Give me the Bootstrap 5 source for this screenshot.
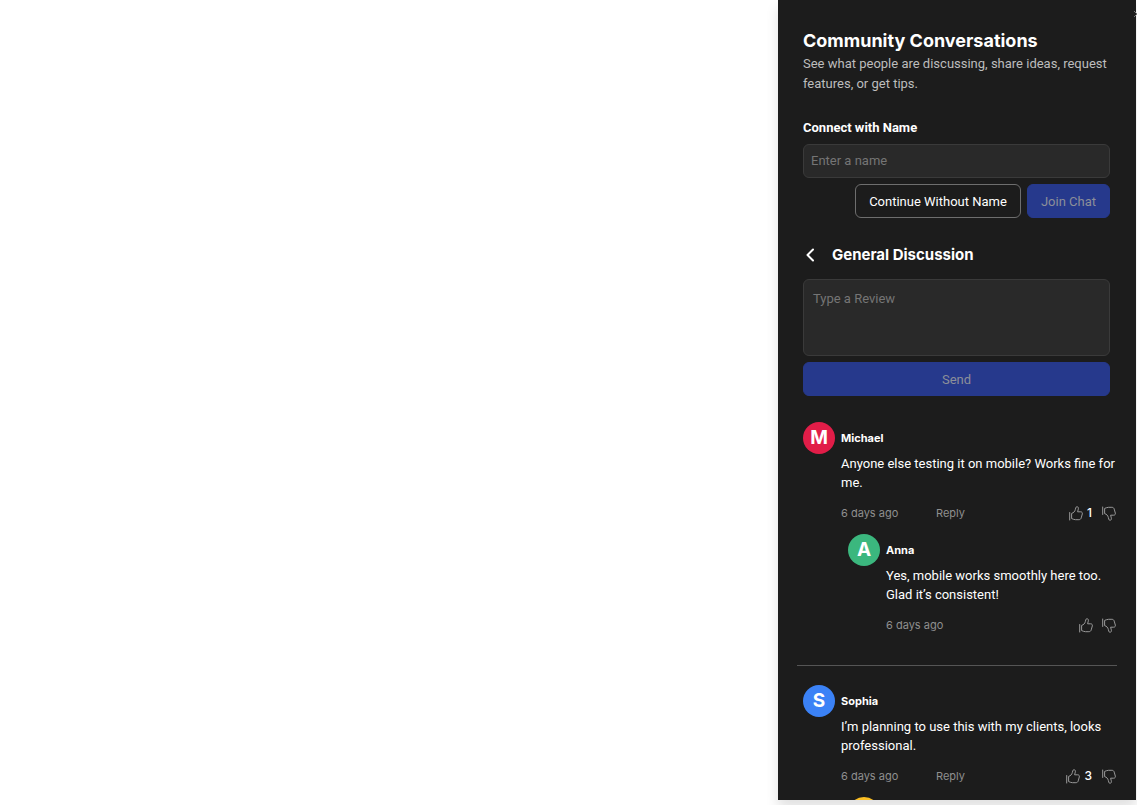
<!DOCTYPE html>
<html lang="en">
<head>
<meta charset="utf-8">
<meta name="viewport" content="width=device-width, initial-scale=1">
<title>Community Conversations</title>
<link href="https://cdn.jsdelivr.net/npm/bootstrap@5.3.0/dist/css/bootstrap.min.css" rel="stylesheet">
<style>
  body { font-family: Roboto, "Liberation Sans", sans-serif; font-size: 13px; line-height: 20px; background: #fff; }
  .chat-stage { height: 100vh; padding: 0 1px 5px 0; }
  .chat-panel { width: 358px; max-width: 100%; background: #1c1c1c; color: #fff; box-shadow: 0 8px 12px rgba(0,0,0,.12); }
  .chat-close { top: 3px; right: -8px; width: 14px; height: 20px; color: #777; line-height: 1; }
  .chat-intro { padding: 27px 26px 0 25px; }
  .chat-title, .chat-topic h2, .chat-avatar, .chat-name, .chat-meta { font-family: Inter, "Liberation Sans", sans-serif; }
  .chat-title { font-size: 18px; line-height: 27px; font-weight: 700; }
  .chat-desc { color: #bdbdbd; }
  .chat-label { font-weight: 700; margin: 24px 0 6px; }
  .chat-field, .chat-field:focus { background: #292929; border: 1px solid #3a3a3a; border-radius: 6px; color: #fff; font-size: 13px; line-height: 20px; }
  .chat-field::placeholder { color: #757575; }
  input.chat-field { height: 34px; padding: 5px 7px 6px; }
  textarea.chat-field { height: 77px; padding: 9px; resize: none; }
  .chat-actions { gap: 6px; margin-top: 6px; }
  .chat-btn { height: 34px; padding: 7px 13px 5px; border-radius: 6px; font-size: 13px; line-height: 20px; color: #fff; border: 1px solid #6e6e6e; }
  .chat-btn:disabled { background: #26398c; border-color: #26398c; color: #8c8f99; opacity: 1; }
  .chat-topic { gap: 14px; margin: 25px 0 12px; }
  .chat-topic h2 { font-size: 15px; line-height: 24px; font-weight: 700; }
  .chat-list { padding: 26px 19px 0 19px; }
  .chat-msg { gap: 6px; padding-left: 6px; margin-bottom: 12px; }
  .chat-reply { padding-left: 51px; }
  .chat-avatar { width: 32px; height: 32px; font-size: 19px; font-weight: 700; }
  .chat-name { font-size: 11px; line-height: 32px; font-weight: 700; }
  .chat-text { line-height: 19px; }
  .chat-meta { margin-top: 12px; font-size: 11px; line-height: 18px; color: #8f8f8f; }
  .chat-time { width: 95px; }
  .chat-link { color: #8f8f8f; font-size: 11px; line-height: 18px; }
  .chat-votes { gap: 9px; padding-right: 1px; }
  .chat-vote { gap: 4px; color: #fff; font-size: 12px; font-weight: 500; line-height: 18px; }
  .chat-count { margin-right: 1px; }
  .chat-vote svg { color: #999; }
  .chat-rule { margin: 31px 0 19px; border-color: #555; opacity: 1; }
  .bg-rose { background: #e11d48; } .bg-mint { background: #3bb77e; } .bg-sky { background: #3b82f6; } .bg-sun { background: #fbbf24; }
</style>
</head>
<body class="overflow-hidden">
<svg class="d-none" aria-hidden="true">
  <symbol id="thumb" viewBox="0 0 14 15"><path d="M.7 6.500v7.500M3 7.300c1.700-.5 2.900-1.900 3.300-3.700L6.800 1.800c.2-.8.600-1.100 1.200-1.100 1.200 0 1.600 1.200 1.300 2.400l-.7 2.700h3.100c1.300 0 1.900 1 1.600 2.200l-1.100 3.900c-.3 1.100-1.100 1.800-2.300 1.800H6.500c-1.400 0-2.200-.6-3.500-1z" fill="none" stroke="currentColor" stroke-linecap="round" stroke-linejoin="round"/></symbol>
</svg>
<div class="chat-stage d-flex justify-content-end">
<aside class="chat-panel position-relative h-100">
  <button class="chat-close btn p-0 border-0 position-absolute" aria-label="Close"><svg width="8" height="8" viewBox="0 0 8 8"><path d="M1 1l6 6M7 1L1 7" stroke="currentColor" fill="none"/></svg></button>
  <div class="h-100 overflow-hidden">
  <div class="chat-intro">
    <h1 class="chat-title mb-0">Community Conversations</h1>
    <p class="chat-desc mb-0">See what people are discussing, share ideas, request features, or get tips.</p>
    <form>
      <label class="chat-label d-block" for="name">Connect with Name</label>
      <input id="name" class="chat-field form-control" type="text" placeholder="Enter a name">
      <div class="chat-actions d-flex justify-content-end">
        <button type="button" class="chat-btn btn">Continue Without Name</button>
        <button type="submit" class="chat-btn btn" disabled>Join Chat</button>
      </div>
    </form>
    <div class="chat-topic d-flex align-items-center">
      <button class="btn p-0 border-0 d-flex text-white" aria-label="Back"><svg width="15" height="16" viewBox="0 0 15 16"><path d="M10 2.500L4.500 8l5.500 5.500" fill="none" stroke="currentColor" stroke-width="2" stroke-linecap="round" stroke-linejoin="round"/></svg></button>
      <h2 class="mb-0">General Discussion</h2>
    </div>
    <form>
      <textarea class="chat-field form-control" placeholder="Type a Review" aria-label="Review"></textarea>
      <div class="chat-actions d-flex"><button class="chat-btn btn w-100" disabled>Send</button></div>
    </form>
  </div>
  <div class="chat-list">
    <article class="chat-msg d-flex">
      <div class="chat-avatar bg-rose rounded-circle d-flex align-items-center justify-content-center flex-shrink-0">M</div>
      <div class="flex-grow-1">
        <div class="chat-name">Michael</div>
        <div class="chat-text">Anyone else testing it on mobile? Works fine for me.</div>
        <div class="chat-meta d-flex"><span class="chat-time">6 days ago</span><button class="chat-link btn p-0 border-0">Reply</button>
          <div class="chat-votes d-flex ms-auto"><button class="chat-vote btn p-0 border-0 d-flex align-items-center" aria-label="Like"><svg width="14" height="15"><use href="#thumb"/></svg><span class="chat-count">1</span></button><button class="chat-vote btn p-0 border-0 d-flex align-items-center" aria-label="Dislike"><svg width="14" height="15" viewBox="0 0 14 15"><use href="#thumb" width="14" height="15" transform="matrix(1 0 0 -1 0 15)"/></svg></button></div></div>
      </div>
    </article>
    <article class="chat-msg chat-reply d-flex">
      <div class="chat-avatar bg-mint rounded-circle d-flex align-items-center justify-content-center flex-shrink-0">A</div>
      <div class="flex-grow-1">
        <div class="chat-name">Anna</div>
        <div class="chat-text">Yes, mobile works smoothly here too. Glad it’s consistent!</div>
        <div class="chat-meta d-flex"><span class="chat-time">6 days ago</span>
          <div class="chat-votes d-flex ms-auto"><button class="chat-vote btn p-0 border-0 d-flex align-items-center" aria-label="Like"><svg width="14" height="15"><use href="#thumb"/></svg></button><button class="chat-vote btn p-0 border-0 d-flex align-items-center" aria-label="Dislike"><svg width="14" height="15" viewBox="0 0 14 15"><use href="#thumb" width="14" height="15" transform="matrix(1 0 0 -1 0 15)"/></svg></button></div></div>
      </div>
    </article>
    <hr class="chat-rule">
    <article class="chat-msg d-flex">
      <div class="chat-avatar bg-sky rounded-circle d-flex align-items-center justify-content-center flex-shrink-0">S</div>
      <div class="flex-grow-1">
        <div class="chat-name">Sophia</div>
        <div class="chat-text">I’m planning to use this with my clients, looks professional.</div>
        <div class="chat-meta d-flex"><span class="chat-time">6 days ago</span><button class="chat-link btn p-0 border-0">Reply</button>
          <div class="chat-votes d-flex ms-auto"><button class="chat-vote btn p-0 border-0 d-flex align-items-center" aria-label="Like"><svg width="14" height="15"><use href="#thumb"/></svg><span class="chat-count">3</span></button><button class="chat-vote btn p-0 border-0 d-flex align-items-center" aria-label="Dislike"><svg width="14" height="15" viewBox="0 0 14 15"><use href="#thumb" width="14" height="15" transform="matrix(1 0 0 -1 0 15)"/></svg></button></div></div>
      </div>
    </article>
    <article class="chat-msg chat-reply d-flex">
      <div class="chat-avatar bg-sun rounded-circle flex-shrink-0"></div>
    </article>
  </div>
  </div>
</aside>
</div>
<script src="https://cdn.jsdelivr.net/npm/bootstrap@5.3.0/dist/js/bootstrap.bundle.min.js"></script>
</body>
</html>
